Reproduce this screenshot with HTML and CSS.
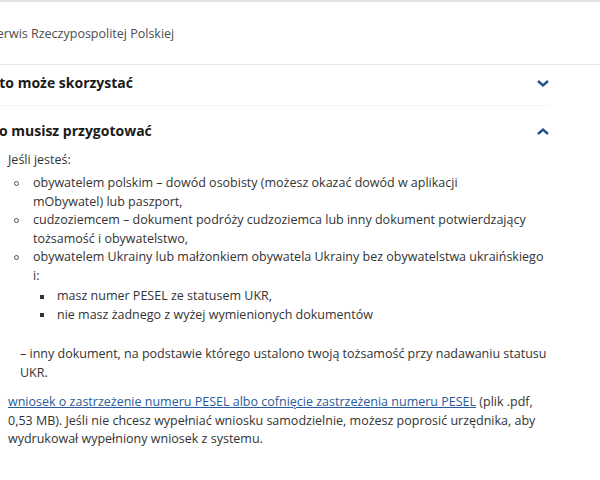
FILE: index.html
```html
<!DOCTYPE html>
<html lang="pl">
<head>
  <meta charset="UTF-8" />
  <title>Zastrzeżenie numeru PESEL</title>
  <link rel="stylesheet" href="styles.css">
</head>
<body>
  <div class="topbar">
    <div class="page">
      <span class="service">Serwis Rzeczypospolitej Polskiej</span>
    </div>
  </div>

  <div class="page">
    <div class="accordion">
      <div class="acc-item">
        <div class="acc-head">
          <h3>Kto może skorzystać</h3>
          <svg class="chevron" width="14" height="9" viewBox="0 0 14 9"><path d="M2 2 L7 6.5 L12 2" /></svg>
        </div>
      </div>

      <div class="acc-item acc-open">
        <div class="acc-head">
          <h3>Co musisz przygotować</h3>
          <svg class="chevron" width="14" height="9" viewBox="0 0 14 9"><path d="M2 7 L7 2.5 L12 7" /></svg>
        </div>
        <div class="acc-body">
          <p class="lead">Jeśli jesteś:</p>
          <ul class="list">
            <li>obywatelem polskim – dowód osobisty (możesz okazać dowód w aplikacji<br>mObywatel) lub paszport,</li>
            <li>cudzoziemcem – dokument podróży cudzoziemca lub inny dokument potwierdzający tożsamość i obywatelstwo,</li>
            <li>obywatelem Ukrainy lub małżonkiem obywatela Ukrainy bez obywatelstwa ukraińskiego<br>i:
              <ul class="sublist">
                <li>masz numer PESEL ze statusem UKR,</li>
                <li>nie masz żadnego z wyżej wymienionych dokumentów</li>
              </ul>
            </li>
          </ul>
          <p class="note">– inny dokument, na podstawie którego ustalono twoją tożsamość przy nadawaniu statusu UKR.</p>
          <p class="form"><a href="#">wniosek o zastrzeżenie numeru PESEL albo cofnięcie zastrzeżenia numeru PESEL</a> (plik .pdf, 0,53 MB). Jeśli nie chcesz wypełniać wniosku samodzielnie, możesz poprosić urzędnika, aby wydrukował wypełniony wniosek z systemu.</p>
        </div>
      </div>
    </div>
  </div>
</body>
</html>
```

FILE: styles.css
```css
body {
  margin: 0;
  font-family: "Open Sans", "Liberation Sans", sans-serif;
  color: #333;
  background: #fff;
  overflow: hidden;
}

/* strona jest przycięta z lewej strony */
.page {
  margin-left: -10px;
  width: 570px;
}

.topbar {
  border-top: 2px solid #e4e4e4;
  border-bottom: 1px solid #e8e8e8;
  height: 59px;
  padding-bottom: 3px;
  display: flex;
  align-items: center;
}

.service {
  font-size: 12.5px;
  color: #4d4d4d;
}

.acc-item {
  border-bottom: 1px solid #f4f4f4;
  margin-right: 10px;
}

.acc-open {
  border-bottom: none;
}

.acc-head {
  display: flex;
  align-items: center;
  justify-content: space-between;
  padding: 7px 0 11px;
}

.acc-open .acc-head {
  padding: 14px 0 0;
}

.acc-head h3 {
  margin: 0;
  font-size: 14px;
  line-height: 22px;
  font-weight: 700;
  color: #1b1b1b;
}

.chevron path {
  fill: none;
  stroke: #25508c;
  stroke-width: 2.4;
}

.acc-body {
  padding: 9px 0 0 18px;
  margin-right: 2px;
  font-size: 12.5px;
  line-height: 18.5px;
}

.acc-body p {
  margin: 0;
}

.lead {
  margin-bottom: 4.5px !important;
}

.list,
.sublist {
  margin: 0;
  padding-left: 25px;
  list-style: none;
}

.sublist {
  margin-top: 2px;
  padding-left: 24px;
}

.list li,
.sublist li {
  position: relative;
}

.list > li::before {
  content: "";
  position: absolute;
  left: -19px;
  top: 7px;
  width: 3px;
  height: 3px;
  border: 1.3px solid #555;
  border-radius: 50%;
}

.sublist > li::before {
  content: "";
  position: absolute;
  left: -17px;
  top: 7.5px;
  width: 4px;
  height: 4px;
  background: #333;
}

.note {
  margin: 21px 0 0 12px !important;
}

.form {
  margin-top: 11px !important;
}

.form a {
  color: #2a5c9c;
}
```
